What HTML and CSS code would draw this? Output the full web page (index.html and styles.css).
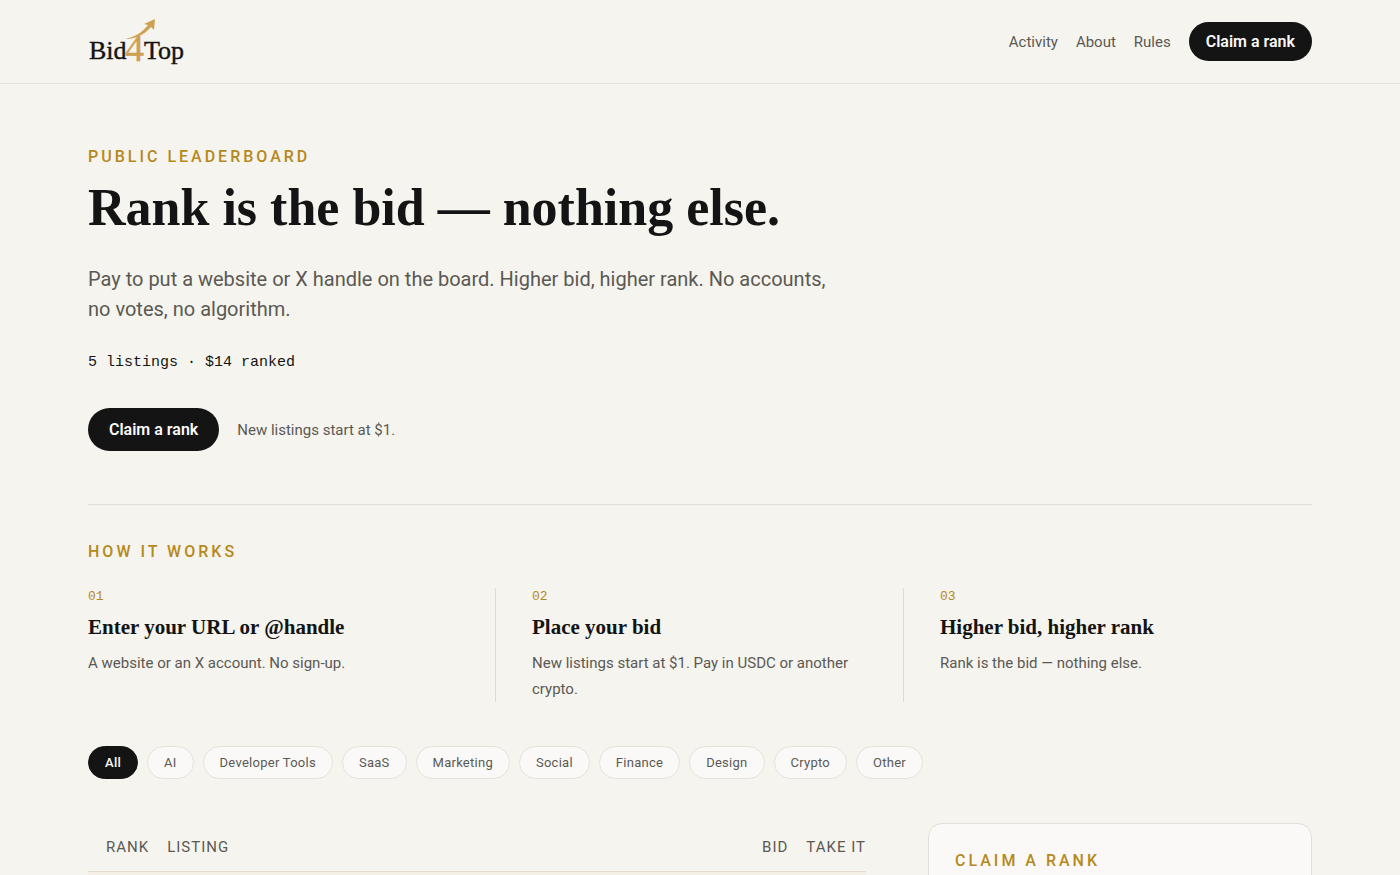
FILE: index.html
```html
<!DOCTYPE html>
<html lang="en">
<head>
<meta charset="utf-8">
<meta name="viewport" content="width=device-width, initial-scale=1">
<title>Bid4Top</title>
<link rel="stylesheet" href="styles.css">
</head>
<body>
<header class="site-header">
  <div class="wrap header-row">
    <a class="logo" href="#" aria-label="Bid4Top home">
      <svg width="96" height="48" viewBox="0 0 96 48" aria-hidden="true">
        <text class="logo-word" x="1" y="41">Bid</text>
        <text class="logo-four" x="37" y="43">4</text>
        <text class="logo-word" x="56" y="41">Top</text>
        <path class="logo-arrow" d="M37 21C47 19 55 14 60 7L56 6L67 1L66 12L63 9C56 17 48 21 37 21Z"/>
      </svg>
    </a>
    <nav class="nav">
      <a href="#">Activity</a>
      <a href="#">About</a>
      <a href="#">Rules</a>
      <button class="btn" type="button">Claim a rank</button>
    </nav>
  </div>
</header>
<main class="wrap">
  <section class="hero">
    <p class="eyebrow">Public leaderboard</p>
    <h1>Rank is the bid — nothing else.</h1>
    <p class="lede">Pay to put a website or X handle on the board. Higher bid, higher rank. No accounts, no votes, no algorithm.</p>
    <p class="stats">5 listings · $14 ranked</p>
    <div class="actions">
      <button class="btn btn-large" type="button">Claim a rank</button>
      <span class="note">New listings start at $1.</span>
    </div>
  </section>
  <section class="how">
    <h2 class="eyebrow">How it works</h2>
    <ol class="steps">
      <li><span class="num">01</span><h3>Enter your URL or @handle</h3><p>A website or an X account. No sign-up.</p></li>
      <li><span class="num">02</span><h3>Place your bid</h3><p>New listings start at $1. Pay in USDC or another crypto.</p></li>
      <li><span class="num">03</span><h3>Higher bid, higher rank</h3><p>Rank is the bid — nothing else.</p></li>
    </ol>
  </section>
  <div class="chips">
    <button class="chip chip-active" type="button">All</button>
    <button class="chip" type="button">AI</button>
    <button class="chip" type="button">Developer Tools</button>
    <button class="chip" type="button">SaaS</button>
    <button class="chip" type="button">Marketing</button>
    <button class="chip" type="button">Social</button>
    <button class="chip" type="button">Finance</button>
    <button class="chip" type="button">Design</button>
    <button class="chip" type="button">Crypto</button>
    <button class="chip" type="button">Other</button>
  </div>
  <div class="board">
    <table class="ranks">
      <thead><tr><th scope="col">Rank</th><th class="listing" scope="col">Listing</th><th scope="col">Bid</th><th scope="col">Take it</th></tr></thead>
      <tbody><tr><td colspan="4"></td></tr></tbody>
    </table>
    <aside class="card"><h2 class="eyebrow">Claim a rank</h2></aside>
  </div>
</main>
</body>
</html>
```
FILE: styles.css
```css
* { box-sizing: border-box; }
body {
  margin: 0;
  background: #f5f4ee;
  color: #141414;
  font: 15px/24px Roboto, "Liberation Sans", sans-serif;
  scrollbar-width: none;
}
html { scrollbar-width: none; }
h1, h2, h3, p, ol { margin: 0; padding: 0; }
a { color: inherit; text-decoration: none; }
button { font: inherit; cursor: pointer; }
.wrap { max-width: 1400px; margin: 0 auto; padding: 0 88px; }
.site-header { border-bottom: 1px solid #e5e2db; }
.header-row { display: flex; align-items: center; justify-content: space-between; height: 83px; }
.logo svg { display: block; overflow: visible; }
.logo-word { font: 26px "Liberation Serif", serif; fill: #141414; stroke: #141414; stroke-width: 0.4px; }
.logo-four { font: 38px "Liberation Serif", serif; fill: #cfa052; stroke: #cfa052; stroke-width: 0.4px; }
.logo-arrow { fill: #cfa052; }
.nav { display: flex; align-items: center; gap: 18px; color: #5b5954; }
.btn { height: 39px; padding: 0 17px; border: 0; border-radius: 22px; background: #141414; color: #faf9f7; font-size: 16px; font-weight: 600; }
.btn-large { height: 43px; padding: 0 21px; }
.hero { padding: 60px 0 53px; border-bottom: 1px solid #e0ded7; }
.eyebrow { color: #b5891c; font-size: 16px; font-weight: 500; line-height: 26px; letter-spacing: 3px; text-transform: uppercase; }
h1 { margin-top: 6px; font: bold 52px/64px "Liberation Serif", serif; }
.lede { max-width: 748px; margin-top: 24px; color: #5b5954; font-size: 20px; line-height: 30px; }
.stats { margin-top: 26px; font-family: "Liberation Mono", monospace; line-height: 26px; }
.actions { display: flex; align-items: center; gap: 18px; margin-top: 32px; }
.note { color: #5b5954; }
.how { padding-top: 34px; }
.steps { display: grid; grid-template-columns: repeat(3, 1fr); margin-top: 23px; list-style: none; }
.steps li { padding: 0 36px; border-right: 1px solid #dedcd5; }
.steps li:first-child { padding-left: 0; }
.steps li:last-child { border-right: 0; }
.num { display: block; color: #b5891c; font: 13px/18px "Liberation Mono", monospace; }
h3 { margin-top: 6px; font: bold 21px/30px "Liberation Serif", serif; }
.steps p { margin-top: 8px; color: #5b5954; line-height: 26px; }
.chips { display: flex; flex-wrap: wrap; gap: 9px; margin-top: 44px; }
.chip { height: 33px; padding: 0 16px; border: 1px solid #e5e2db; border-radius: 17px; background: #faf9f7; color: #5b5954; font-size: 13px; letter-spacing: 0.02em; }
.chip-active { border-color: #141414; background: #141414; color: #faf9f7; font-weight: 500; }
.board { display: grid; grid-template-columns: minmax(0, 1fr) 384px; align-items: start; gap: 62px; margin-top: 44px; }
.ranks { width: 100%; border-collapse: collapse; }
.ranks th { height: 48px; padding: 0 0 0 18px; border-bottom: 1px solid #e5dccb; color: #5b5954; font-size: 15px; font-weight: 400; letter-spacing: 1px; text-align: left; text-transform: uppercase; white-space: nowrap; }
.ranks .listing { width: 100%; }
.ranks td { height: 60px; background: #f5f0e5; }
.card { min-height: 100px; padding: 24px 26px; border: 1px solid #e2e0db; border-radius: 14px; background: #faf9f7; }
```
